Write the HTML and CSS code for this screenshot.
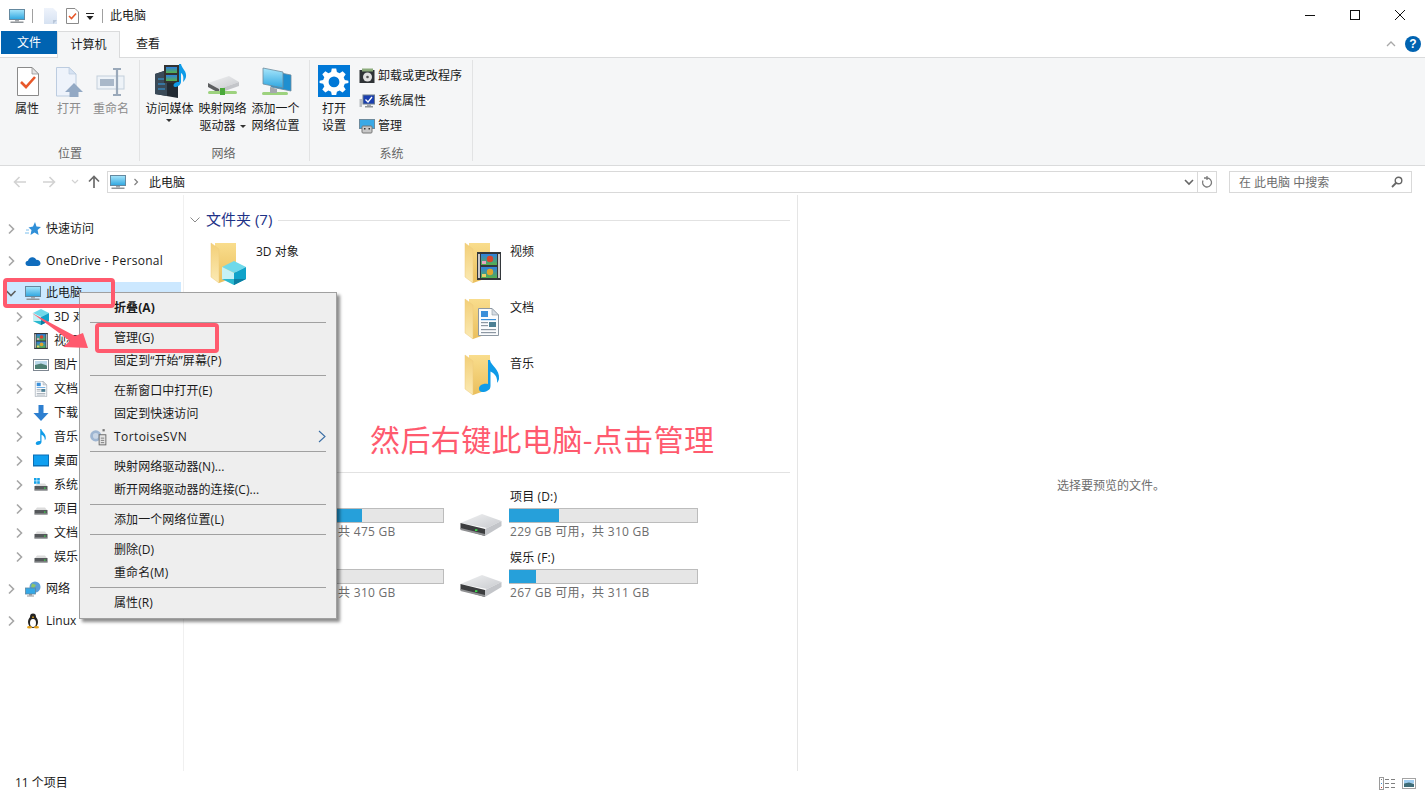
FILE: index.html
```html
<!DOCTYPE html>
<html lang="zh-CN">
<head>
<meta charset="utf-8">
<title>此电脑</title>
<link rel="stylesheet" href="styles.css">
</head>
<body>
<svg class="defs" xmlns="http://www.w3.org/2000/svg">
  <defs>
    <linearGradient id="gScreen" x1="0" y1="0" x2="0" y2="1"><stop offset="0" stop-color="#a8e6fb"/><stop offset="1" stop-color="#2ea6e0"/></linearGradient>
    <linearGradient id="gFolder" x1="0" y1="0" x2="0" y2="1"><stop offset="0" stop-color="#f9dd8d"/><stop offset="1" stop-color="#eabf5c"/></linearGradient>
    <linearGradient id="gLeaf" x1="0" y1="0" x2="0" y2="1"><stop offset="0" stop-color="#f3cf77"/><stop offset="1" stop-color="#fbeab4"/></linearGradient>
    <linearGradient id="gDrive" x1="0" y1="0" x2="1" y2="1"><stop offset="0" stop-color="#f0f1f2"/><stop offset="1" stop-color="#c9cbcf"/></linearGradient>
    <linearGradient id="gDoc" x1="0" y1="0" x2="0" y2="1"><stop offset="0" stop-color="#eef3fb"/><stop offset="1" stop-color="#d6e2f2"/></linearGradient>
    <linearGradient id="gSky" x1="0" y1="0" x2="0" y2="1"><stop offset="0" stop-color="#2f7fe0"/><stop offset="1" stop-color="#58b04a"/></linearGradient>
  </defs>
  <symbol id="i-monitor" viewBox="0 0 16 16">
    <rect x="0.5" y="1.5" width="15" height="10" fill="url(#gScreen)" stroke="#64889f"/>
    <rect x="6" y="12" width="4" height="1.5" fill="#a5a9ad"/>
    <rect x="1.5" y="13.5" width="13" height="1.5" fill="#8f9498"/>
  </symbol>
  <symbol id="i-folder" viewBox="0 0 48 48">
    <polygon points="7,4 28,4 28,38 11,44 7,40" fill="url(#gFolder)"/>
    <polygon points="3,4 11,10 11,44 3,38" fill="url(#gLeaf)" stroke="#eccb7c" stroke-width="0.5"/>
  </symbol>
  <symbol id="i-cube" viewBox="0 0 24 24">
    <polygon points="12,0 24,6 12,12 0,6" fill="#6fd9ea"/>
    <polygon points="0,6 12,12 12,24 0,18" fill="#c6f1f5"/>
    <polygon points="24,6 12,12 12,24 24,18" fill="#10a3ca"/>
    <polygon points="12,18 24,18 12,24" fill="#0b7fa3"/>
    <polygon points="12,18 0,18 12,24" fill="#2ab8cf"/>
  </symbol>
  <symbol id="i-film" viewBox="0 0 24 28">
    <rect x="0" y="0" width="24" height="28" fill="#33373b"/>
    <rect x="1" y="2" width="2" height="24" fill="#c9c9c9"/>
    <rect x="21" y="2" width="2" height="24" fill="#c9c9c9"/>
    <rect x="4" y="2" width="16" height="11" fill="url(#gSky)"/>
    <rect x="4" y="15" width="16" height="11" fill="url(#gSky)"/>
    <circle cx="13" cy="7" r="3.2" fill="#d9442c"/>
    <circle cx="13" cy="20" r="3.2" fill="#e0a62c"/>
    <rect x="5" y="9" width="4" height="3" fill="#e8a7c0"/>
    <rect x="5" y="22" width="4" height="3" fill="#e8d06a"/>
  </symbol>
  <symbol id="i-doc" viewBox="0 0 21 28">
    <polygon points="0.5,0.5 14,0.5 20.5,7 20.5,27.5 0.5,27.5" fill="#fbfcfd" stroke="#8d98a3"/>
    <polygon points="14,0.5 14,7 20.5,7" fill="#d5dce3" stroke="#8d98a3" stroke-width="0.6"/>
    <rect x="3" y="3" width="7" height="6" fill="#3a8fd9"/>
    <rect x="3" y="11" width="15" height="1.2" fill="#3a8fd9"/>
    <rect x="3" y="14" width="7" height="1.2" fill="#8d98a3"/>
    <rect x="11" y="14" width="7" height="5" fill="#4c7f94"/>
    <rect x="3" y="17" width="7" height="1.2" fill="#8d98a3"/>
    <rect x="3" y="21" width="15" height="1.2" fill="#8d98a3"/>
    <rect x="3" y="24" width="15" height="1.2" fill="#8d98a3"/>
  </symbol>
  <symbol id="i-note" viewBox="0 0 21 32">
    <path d="M9 0 L11 0 C12 6 21 9 20 19 C19.6 21 18.5 22 18 23 C19 17 15 13 11.5 11.5 L11.5 26 C11.5 30 7 32 3.5 32 C1 32 0 30.5 0 28.5 C0 25.5 4 23 9 24 Z" fill="#0f9be8"/>
  </symbol>
  <symbol id="i-bigdrive" viewBox="0 0 42 22">
    <polygon points="0.5,9 22,0 41.5,7 27,14" fill="url(#gDrive)"/>
    <polygon points="41.5,7 41.5,12 25,22 25,15" fill="#c3c5c9"/>
    <polygon points="0.5,9 25,15 25,22 0.5,15" fill="#3c3d3f"/>
    <polygon points="0.5,14 25,20 25,22 0.5,16" fill="#8f9092"/>
    <rect x="15" y="15.2" width="2.4" height="1.8" fill="#3cd64a"/>
  </symbol>
  <symbol id="i-drive" viewBox="0 0 16 16">
    <polygon points="2,9 4,6.5 12,6.5 14,9" fill="#dcdcdc"/>
    <rect x="1.5" y="9" width="13" height="4.5" fill="#55585b"/>
    <rect x="1.5" y="12.5" width="13" height="1" fill="#a0a2a4"/>
    <rect x="11" y="10.5" width="1.6" height="1.2" fill="#3cd64a"/>
  </symbol>
  <symbol id="i-sysdrive" viewBox="0 0 16 16">
    <use href="#i-drive" width="16" height="16"/>
    <rect x="1" y="1" width="2.6" height="2.6" fill="#16a2e8"/><rect x="4.2" y="1" width="2.6" height="2.6" fill="#16a2e8"/>
    <rect x="1" y="4.2" width="2.6" height="2.6" fill="#16a2e8"/><rect x="4.2" y="4.2" width="2.6" height="2.6" fill="#16a2e8"/>
  </symbol>
  <symbol id="i-star" viewBox="0 0 16 16">
    <polygon points="10,1 11.5,5.5 16,6 12.6,9 13.6,14 9.5,11.5 5.5,14 6.5,9 3.5,6.5 8,5.5" fill="#2f8fd8"/>
    <path d="M1 9 H4 M0 12 H4" stroke="#7cc0ee" stroke-width="1"/>
  </symbol>
  <symbol id="i-cloud" viewBox="0 0 16 16">
    <path d="M3.5 13 C1.5 13 0.5 11.7 0.5 10.3 C0.5 8.8 1.6 7.8 3 7.7 C3.6 5.3 5.5 4 7.6 4.2 C9.3 4.3 10.6 5.3 11.2 6.7 C13.6 6.5 15.5 8.2 15.5 10.2 C15.5 11.8 14.2 13 12.5 13 Z" fill="#0f6cbd"/>
  </symbol>
  <symbol id="i-picture" viewBox="0 0 16 16">
    <rect x="0.5" y="2.5" width="15" height="11" fill="#fff" stroke="#7e8791"/>
    <rect x="2" y="4" width="12" height="4" fill="#bcd9ea"/>
    <polygon points="2,8 8,6.5 14,8.5 14,12 2,12" fill="#4d7f73"/>
  </symbol>
  <symbol id="i-arrowdown" viewBox="0 0 16 16">
    <polygon points="5.5,0 10.5,0 10.5,8 15.5,8 8,16 0.5,8 5.5,8" fill="#2d7fd0"/>
  </symbol>
  <symbol id="i-desktop" viewBox="0 0 16 16">
    <rect x="0.5" y="2" width="15" height="11" fill="#0f9ff0" stroke="#0a6fb5"/>
    <rect x="1" y="12" width="14" height="1" fill="#0a6fb5"/>
  </symbol>
  <symbol id="i-network" viewBox="0 0 16 16">
    <circle cx="10" cy="6" r="5.5" fill="#5c9fd8"/>
    <path d="M7 2.5 L11 4 L9 7 L6 6 Z" fill="#8fc56a"/>
    <rect x="0.5" y="7" width="10" height="6" fill="#35a8e6" stroke="#5f87a0" stroke-width="0.8"/>
    <rect x="4" y="13" width="3" height="1.5" fill="#8f9498"/>
    <rect x="2" y="14.5" width="7" height="1" fill="#8f9498"/>
  </symbol>
  <symbol id="i-penguin" viewBox="0 0 16 16">
    <ellipse cx="8" cy="9" rx="5" ry="6" fill="#232323"/>
    <ellipse cx="8" cy="3.8" rx="3" ry="3.4" fill="#232323"/>
    <ellipse cx="8" cy="10" rx="3" ry="4" fill="#fff"/>
    <rect x="7" y="3.6" width="2" height="1.2" fill="#e4a11b"/>
    <ellipse cx="4.5" cy="14.2" rx="2.5" ry="1.3" fill="#e4a11b"/>
    <ellipse cx="11.5" cy="14.2" rx="2.5" ry="1.3" fill="#e4a11b"/>
  </symbol>
  <symbol id="i-chev" viewBox="0 0 16 16">
    <path d="M6 3.5 L10.5 8 L6 12.5" fill="none" stroke="#a6a6a6" stroke-width="1.6"/>
  </symbol>
  <symbol id="i-chevdown" viewBox="0 0 16 16">
    <path d="M3.5 6 L8 10.5 L12.5 6" fill="none" stroke="#5f5f5f" stroke-width="1.6"/>
  </symbol>
</svg>

<div class="window">
  <header class="titlebar">
    <div class="qat">
      <svg class="ic16 qat-mon"><use href="#i-monitor"/></svg>
      <span class="qat-sep"></span>
      <svg class="qat-doc" viewBox="0 0 13 16"><polygon points="0,0 9,0 13,4 13,16 0,16" fill="url(#gDoc)"/><polygon points="9,12 13,12 9,16" fill="#b9c7da"/></svg>
      <svg class="qat-check" viewBox="0 0 13 16"><polygon points="0.5,0.5 9,0.5 12.5,4 12.5,15.5 0.5,15.5" fill="#fff" stroke="#8a8a8a"/><path d="M3 8 L5.5 10.5 L10 5.5" fill="none" stroke="#e8582a" stroke-width="1.6"/></svg>
      <svg class="qat-drop" viewBox="0 0 8 8"><rect x="0" y="0" width="8" height="1" fill="#222"/><polygon points="0.5,3 7.5,3 4,7" fill="#222"/></svg>
      <span class="qat-sep qat-sep2"></span>
      <span class="title-text">此电脑</span>
    </div>
    <div class="winctl">
      <span class="wbtn"><svg viewBox="0 0 10 10"><rect x="0" y="5" width="10" height="1" fill="#111"/></svg></span>
      <span class="wbtn"><svg viewBox="0 0 10 10"><rect x="0.5" y="0.5" width="9" height="9" fill="none" stroke="#111"/></svg></span>
      <span class="wbtn"><svg viewBox="0 0 10 10"><path d="M0 0 L10 10 M10 0 L0 10" stroke="#111" stroke-width="1"/></svg></span>
    </div>
  </header>

  <nav class="tabs">
    <span class="tab tab-file">文件</span>
    <span class="tab tab-active">计算机</span>
    <span class="tab tab-view">查看</span>
    <span class="tabs-right">
      <svg class="ribbon-up" viewBox="0 0 10 6"><path d="M1 5 L5 1 L9 5" fill="none" stroke="#a8a8a8" stroke-width="1.3"/></svg>
      <span class="help">?</span>
    </span>
  </nav>

  <section class="ribbon">
    <div class="group group-loc">
      <div class="group-body">
        <div class="rbtn">
          <span class="rb-icon"><svg viewBox="0 0 36 36"><polygon points="8.5,5.5 23,5.5 29.5,12 29.5,33.5 8.5,33.5" fill="#fff" stroke="#8a8a8a"/><polygon points="23,5.5 23,12 29.5,12" fill="#e4e4e4" stroke="#8a8a8a" stroke-width="0.7"/><path d="M12 20 L17 25 L26 15" fill="none" stroke="#e8582a" stroke-width="2.6"/></svg></span>
          <span class="rb-label">属性</span>
        </div>
        <div class="rbtn rb-off">
          <span class="rb-icon"><svg viewBox="0 0 36 36"><polygon points="5.5,5.5 18,5.5 25,12 25,34 5.5,34" fill="#eef3fb" stroke="#bccce0"/><polygon points="18,5.5 18,12 25,12" fill="#d6e2f2" stroke="#bccce0" stroke-width="0.7"/><polygon points="23,21 32,30 27.5,30 27.5,35 18.5,35 18.5,30 14,30" fill="#93a9c4"/></svg></span>
          <span class="rb-label">打开</span>
        </div>
        <div class="rbtn rb-off">
          <span class="rb-icon"><svg viewBox="0 0 36 36"><rect x="4" y="14" width="27" height="13" fill="#eef3f8" stroke="#c3cfdc"/><rect x="7" y="17" width="14" height="7" fill="#a9b8c9"/><path d="M20 7 H28 M20 33 H28 M24 7 V33" stroke="#9aa9ba" stroke-width="2.2" fill="none"/></svg></span>
          <span class="rb-label">重命名</span>
        </div>
      </div>
      <div class="group-label">位置</div>
    </div>
    <div class="group group-net">
      <div class="group-body">
        <div class="rbtn rb-wide">
          <span class="rb-icon"><svg viewBox="0 0 36 36"><polygon points="3,12 15,8 26,12 26,36 3,32" fill="#222a33"/><polygon points="3,12 15,8 15,34 3,32" fill="#3a4a58"/><path d="M6 17 H13 M6 22 H13 M6 27 H13" stroke="#36a0e8" stroke-width="1.2"/><rect x="12" y="3" width="15" height="18" fill="#333"/><rect x="14" y="5" width="11" height="6" fill="url(#gSky)"/><rect x="14" y="13" width="11" height="6" fill="url(#gSky)"/><path d="M27 2 L29 2 C30 7 35 9 34 15 C33 18 32 19 31 20 C32 15 31 12 29 11 L29 20 C29 23 25 25 23 25 C21 25 21 22 23 21 C25 19.5 27 20 27 20 Z" fill="#0f9be8"/></svg></span>
          <span class="rb-label">访问媒体<i class="caret caret-block"></i></span>
        </div>
        <div class="rbtn rb-wide">
          <span class="rb-icon"><svg viewBox="0 0 36 36"><polygon points="3,21 24,14 34,20 14,27" fill="url(#gDrive)"/><polygon points="3,21 14,27 14,31 3,25" fill="#5c5e60"/><polygon points="34,20 14,27 14,31 34,24" fill="#c3c5c9"/><rect x="3" y="29" width="29" height="3" rx="1.5" fill="#9dd27e"/><rect x="15" y="26" width="5" height="7" fill="#4aa93a"/></svg></span>
          <span class="rb-label">映射网络<br>驱动器<i class="caret"></i></span>
        </div>
        <div class="rbtn rb-wide">
          <span class="rb-icon"><svg viewBox="0 0 36 36"><polygon points="13,9 33,13 33,29 13,25" fill="#1f8fd0" stroke="#6d8a9c" stroke-width="0.8"/><polygon points="5,6 25,10 25,26 5,22" fill="url(#gScreen)" stroke="#6d8a9c" stroke-width="0.8"/><rect x="4" y="30" width="26" height="3" rx="1.5" fill="#9dd27e"/><polygon points="12,25 19,27 19,31 12,31" fill="#a5a9ad"/></svg></span>
          <span class="rb-label">添加一个<br>网络位置</span>
        </div>
      </div>
      <div class="group-label">网络</div>
    </div>
    <div class="group group-sys">
      <div class="group-body">
        <div class="rbtn rb-set">
          <span class="rb-icon"><svg class="set-svg" viewBox="0 0 32 32"><rect width="32" height="32" fill="#0078d7"/><path fill="#fff" fill-rule="evenodd" d="M13.8 3.5 H18.2 L18.9 7.1 L21.6 8.2 L24.6 6.2 L27.7 9.3 L25.7 12.3 L26.8 15 L30.4 15.7 V18.1 L26.8 18.8 L25.7 21.5 L27.7 24.5 L24.6 27.6 L21.6 25.6 L18.9 26.7 L18.2 30 H13.8 L13.1 26.7 L10.4 25.6 L7.4 27.6 L4.3 24.5 L6.3 21.5 L5.2 18.8 L1.6 18.1 V15.7 L5.2 15 L6.3 12.3 L4.3 9.3 L7.4 6.2 L10.4 8.2 L13.1 7.1 Z M16 11.5 A5.4 5.4 0 1 0 16 22.3 A5.4 5.4 0 1 0 16 11.5 Z"/></svg></span>
          <span class="rb-label">打开<br>设置</span>
        </div>
        <ul class="rb-small">
          <li><svg class="ic16" viewBox="0 0 16 16"><rect x="0.5" y="2" width="15" height="13" fill="#2f3336"/><rect x="3" y="0.5" width="11" height="3" fill="#8cab7c"/><circle cx="8.5" cy="9" r="4.5" fill="#e2e2e2"/><circle cx="8.5" cy="9" r="1.3" fill="#555"/></svg>卸载或更改程序</li>
          <li><svg class="ic16" viewBox="0 0 16 16"><rect x="0.5" y="6" width="2.5" height="8" fill="#b9bdc2"/><rect x="4" y="2" width="11.5" height="9" fill="#1a3fb0" stroke="#6d7c8c"/><path d="M6.5 6.5 L9 9 L13 4" fill="none" stroke="#fff" stroke-width="1.3"/><rect x="8" y="11" width="4" height="2" fill="#a5a9ad"/><rect x="6" y="13" width="8" height="1.5" fill="#8f9498"/></svg>系统属性</li>
          <li><svg class="ic16" viewBox="0 0 16 16"><rect x="0.5" y="1.5" width="15" height="9" fill="#3aa9e6" stroke="#6d8a9c"/><rect x="3" y="8" width="10" height="7" rx="1" fill="#c8c8c8" stroke="#777"/><rect x="5" y="10" width="1.5" height="1.5" fill="#333"/><rect x="9.5" y="10" width="1.5" height="1.5" fill="#333"/></svg>管理</li>
        </ul>
      </div>
      <div class="group-label">系统</div>
    </div>
  </section>

  <div class="navbar">
    <div class="nav-arrows">
      <svg class="nav-a" viewBox="0 0 14 12"><path d="M13 6 H2 M6.5 1 L1.5 6 L6.5 11" fill="none" stroke="#d2d2d2" stroke-width="1.6"/></svg>
      <svg class="nav-a" viewBox="0 0 14 12"><path d="M1 6 H12 M7.5 1 L12.5 6 L7.5 11" fill="none" stroke="#d2d2d2" stroke-width="1.6"/></svg>
      <svg class="nav-d" viewBox="0 0 8 6"><path d="M1 1 L4 4 L7 1" fill="none" stroke="#d2d2d2" stroke-width="1.2"/></svg>
      <svg class="nav-u" viewBox="0 0 12 14"><path d="M6 13 V2 M1 6.5 L6 1.5 L11 6.5" fill="none" stroke="#6b6b6b" stroke-width="1.7"/></svg>
    </div>
    <div class="address">
      <svg class="ic16 addr-mon"><use href="#i-monitor"/></svg>
      <svg class="addr-chev" viewBox="0 0 6 8"><path d="M1.5 1 L4.5 4 L1.5 7" fill="none" stroke="#808080" stroke-width="1.2"/></svg>
      <span class="addr-text">此电脑</span>
      <svg class="addr-drop" viewBox="0 0 10 7"><path d="M1 1 L5 5 L9 1" fill="none" stroke="#666" stroke-width="1.6"/></svg>
      <span class="addr-refresh"><svg viewBox="0 0 12 14"><path d="M6 3 A4.5 4.5 0 1 1 2 5.5 M6 1 V5 M3 3 H6.5" fill="none" stroke="#7b7b7b" stroke-width="1.3"/></svg></span>
    </div>
    <div class="search">
      <span class="search-text">在 此电脑 中搜索</span>
      <svg class="search-ic" viewBox="0 0 12 12"><circle cx="7.5" cy="4.5" r="3.3" fill="none" stroke="#666" stroke-width="1.4"/><path d="M5 7 L1 11" stroke="#666" stroke-width="1.8"/></svg>
    </div>
  </div>

  <main class="main">
    <aside class="sidebar">
      <div class="s-row s-group"><svg class="s-chev"><use href="#i-chev"/></svg><svg class="s-ic"><use href="#i-star"/></svg><span>快速访问</span></div>
      <div class="s-row s-group"><svg class="s-chev"><use href="#i-chev"/></svg><svg class="s-ic"><use href="#i-cloud"/></svg><span class="latin">OneDrive - Personal</span></div>
      <div class="s-row s-sel"><svg class="s-chev"><use href="#i-chevdown"/></svg><svg class="s-ic"><use href="#i-monitor"/></svg><span>此电脑</span></div>
      <div class="s-row s-child"><svg class="s-chev"><use href="#i-chev"/></svg><svg class="s-ic"><use href="#i-cube"/></svg><span>3D 对象</span></div>
      <div class="s-row s-child"><svg class="s-chev"><use href="#i-chev"/></svg><svg class="s-ic"><use href="#i-film"/></svg><span>视频</span></div>
      <div class="s-row s-child"><svg class="s-chev"><use href="#i-chev"/></svg><svg class="s-ic"><use href="#i-picture"/></svg><span>图片</span></div>
      <div class="s-row s-child"><svg class="s-chev"><use href="#i-chev"/></svg><svg class="s-ic"><use href="#i-doc"/></svg><span>文档</span></div>
      <div class="s-row s-child"><svg class="s-chev"><use href="#i-chev"/></svg><svg class="s-ic"><use href="#i-arrowdown"/></svg><span>下载</span></div>
      <div class="s-row s-child"><svg class="s-chev"><use href="#i-chev"/></svg><svg class="s-ic"><use href="#i-note"/></svg><span>音乐</span></div>
      <div class="s-row s-child"><svg class="s-chev"><use href="#i-chev"/></svg><svg class="s-ic"><use href="#i-desktop"/></svg><span>桌面</span></div>
      <div class="s-row s-child"><svg class="s-chev"><use href="#i-chev"/></svg><svg class="s-ic"><use href="#i-sysdrive"/></svg><span>系统 (C:)</span></div>
      <div class="s-row s-child"><svg class="s-chev"><use href="#i-chev"/></svg><svg class="s-ic"><use href="#i-drive"/></svg><span>项目 (D:)</span></div>
      <div class="s-row s-child"><svg class="s-chev"><use href="#i-chev"/></svg><svg class="s-ic"><use href="#i-drive"/></svg><span>文档 (E:)</span></div>
      <div class="s-row s-child"><svg class="s-chev"><use href="#i-chev"/></svg><svg class="s-ic"><use href="#i-drive"/></svg><span>娱乐 (F:)</span></div>
      <div class="s-row s-group s-gap"><svg class="s-chev"><use href="#i-chev"/></svg><svg class="s-ic"><use href="#i-network"/></svg><span>网络</span></div>
      <div class="s-row s-group"><svg class="s-chev"><use href="#i-chev"/></svg><svg class="s-ic"><use href="#i-penguin"/></svg><span>Linux</span></div>
    </aside>

    <section class="content">
      <div class="sec-head">
        <svg class="sec-chev" viewBox="0 0 10 6"><path d="M0.5 0.5 L5 5 L9.5 0.5" fill="none" stroke="#8a8a8a" stroke-width="1"/></svg>
        <span class="sec-title">文件夹 (7)</span>
        <span class="sec-line"></span>
      </div>
      <div class="folders">
        <div class="tile"><span class="f-box"><svg class="f-svg"><use href="#i-folder"/></svg><svg class="ov ov-cube"><use href="#i-cube"/></svg></span><span>3D 对象</span></div>
        <div class="tile"><span class="f-box"><svg class="f-svg"><use href="#i-folder"/></svg><svg class="ov ov-film"><use href="#i-film"/></svg></span><span>视频</span></div>
        <div class="tile"><span class="f-box"><svg class="f-svg"><use href="#i-folder"/></svg></span><span>图片</span></div>
        <div class="tile"><span class="f-box"><svg class="f-svg"><use href="#i-folder"/></svg><svg class="ov ov-doc"><use href="#i-doc"/></svg></span><span>文档</span></div>
        <div class="tile"><span class="f-box"><svg class="f-svg"><use href="#i-folder"/></svg></span><span>下载</span></div>
        <div class="tile"><span class="f-box"><svg class="f-svg"><use href="#i-folder"/></svg><svg class="ov ov-note"><use href="#i-note"/></svg></span><span>音乐</span></div>
        <div class="tile"><span class="f-box"><svg class="f-svg"><use href="#i-folder"/></svg></span><span>桌面</span></div>
      </div>
      <div class="sec-head sec-head2">
        <span class="sec-line"></span>
      </div>
      <div class="drives">
        <div class="drive"><svg class="d-ic"><use href="#i-bigdrive"/></svg><div class="d-info"><div class="d-name">系统 (C:)</div><div class="d-bar"><i class="d-fill" style="width:57%"></i></div><div class="d-free">204 GB 可用，共 475 GB</div></div></div>
        <div class="drive"><svg class="d-ic"><use href="#i-bigdrive"/></svg><div class="d-info"><div class="d-name">项目 (D:)</div><div class="d-bar"><i class="d-fill" style="width:26.5%"></i></div><div class="d-free">229 GB 可用，共 310 GB</div></div></div>
        <div class="drive"><svg class="d-ic"><use href="#i-bigdrive"/></svg><div class="d-info"><div class="d-name">文档 (E:)</div><div class="d-bar"><i class="d-fill" style="width:20%"></i></div><div class="d-free">248 GB 可用，共 310 GB</div></div></div>
        <div class="drive"><svg class="d-ic"><use href="#i-bigdrive"/></svg><div class="d-info"><div class="d-name">娱乐 (F:)</div><div class="d-bar"><i class="d-fill" style="width:14.2%"></i></div><div class="d-free">267 GB 可用，共 311 GB</div></div></div>
      </div>
    </section>

    <section class="preview">选择要预览的文件。</section>
  </main>

  <footer class="status">
    <span class="status-text">11 个项目</span>
    <span class="status-views">
      <svg class="sv1" viewBox="0 0 17 13"><rect x="0.5" y="0.5" width="4" height="12" fill="#fff" stroke="#9a9a9a"/><rect x="2" y="2" width="1" height="1" fill="#777"/><rect x="2" y="6" width="1" height="1" fill="#3a8fd9"/><rect x="2" y="10" width="1" height="1" fill="#c0392b"/><path d="M6 2.5 H10 M12 2.5 H16 M6 6.5 H10 M12 6.5 H16 M6 10.5 H10 M12 10.5 H16" stroke="#808080"/></svg>
      <svg class="sv2" viewBox="0 0 14 11"><rect x="0.5" y="0.5" width="13" height="10" fill="#fff" stroke="#a3a3a3"/><rect x="2" y="2" width="10" height="3.5" fill="#9ecdf0"/><polygon points="2,5.5 7,4.5 12,6 12,9 2,9" fill="#3f6d78"/></svg>
    </span>
  </footer>
</div>

<div class="menu">
  <div class="m-item m-bold">折叠(A)</div>
  <div class="m-sep"></div>
  <div class="m-item">管理(G)</div>
  <div class="m-item">固定到“开始”屏幕(P)</div>
  <div class="m-sep"></div>
  <div class="m-item">在新窗口中打开(E)</div>
  <div class="m-item">固定到快速访问</div>
  <div class="m-item m-svn">
    <svg class="m-ic" viewBox="0 0 16 16"><circle cx="6" cy="7" r="5" fill="#9fb6d2"/><circle cx="6" cy="7" r="2.5" fill="#c9d6e6"/><rect x="9" y="6" width="6" height="9" fill="#e4e4e4" stroke="#666" stroke-width="0.8"/><path d="M10.5 9 H13.5 M10.5 11 H13.5 M10.5 13 H13.5" stroke="#666" stroke-width="0.7"/><rect x="12" y="1" width="2" height="2" fill="#777"/></svg>
    <span class="svn-label">TortoiseSVN</span>
    <svg class="m-more" viewBox="0 0 8 13"><path d="M1 1 L7 6.5 L1 12" fill="none" stroke="#3a6ea5" stroke-width="1.1"/></svg>
  </div>
  <div class="m-sep"></div>
  <div class="m-item">映射网络驱动器(N)...</div>
  <div class="m-item">断开网络驱动器的连接(C)...</div>
  <div class="m-sep"></div>
  <div class="m-item">添加一个网络位置(L)</div>
  <div class="m-sep"></div>
  <div class="m-item">删除(D)</div>
  <div class="m-item">重命名(M)</div>
  <div class="m-sep"></div>
  <div class="m-item">属性(R)</div>
</div>

<div class="mark mark-pc"></div>
<div class="mark mark-manage"></div>
<svg class="mark-arrow" viewBox="0 0 100 60"><polygon points="32,10 75,33 83,30 88,45 63,44 70,38" fill="#ff5a6e"/></svg>
<div class="caption">然后右键此电脑-点击管理</div>
</body>
</html>
```

FILE: styles.css
```css
* { box-sizing: border-box; }
html, body { margin: 0; padding: 0; height: 100%; }
body {
  background: #fff;
  color: #1a1a1a;
  font: 12px/18px "Open Sans", "Noto Sans CJK SC", sans-serif;
  overflow: hidden;
  position: relative;
}
svg { display: block; flex: none; }
ul { list-style: none; margin: 0; padding: 0; }
i { font-style: normal; }
.defs { position: absolute; width: 0; height: 0; }
.ic16 { width: 16px; height: 16px; }

.window { display: flex; flex-direction: column; width: 1425px; height: 795px; }

/* title bar */
.titlebar { height: 31px; display: flex; justify-content: space-between; flex: none; }
.qat { display: flex; align-items: center; padding-left: 9px; }
.qat-sep { width: 1px; height: 14px; background: #a0a0a0; margin-left: 7px; }
.qat-doc { width: 13px; height: 16px; margin-left: 11px; }
.qat-check { width: 13px; height: 16px; margin-left: 9px; }
.qat-drop { width: 8px; height: 8px; margin-left: 7px; margin-top: 2px; }
.qat-sep2 { margin-left: 8px; }
.title-text { margin-left: 7px; }
.winctl { display: flex; margin-right: 3px; }
.wbtn { width: 45px; height: 30px; display: flex; align-items: center; justify-content: center; }
.wbtn svg { width: 10px; height: 10px; }

/* tabs */
.tabs { height: 27px; flex: none; display: flex; border-bottom: 1px solid #dadbdc; align-items: flex-start; }
.tab { display: flex; align-items: center; justify-content: center; }
.tab-file { width: 56px; height: 23px; margin-left: 1px; background: #0063b1; color: #fff; }
.tab-active { width: 63px; height: 27px; background: #f5f6f7; border: 1px solid #dadbdc; border-bottom: 0; }
.tab-view { width: 56px; height: 25px; }
.tabs-right { margin-left: auto; display: flex; align-items: center; height: 26px; padding-right: 4px; }
.ribbon-up { width: 10px; height: 6px; margin-right: 9px; }
.help { width: 16px; height: 16px; border-radius: 50%; background: #0063b1; color: #fff; font: bold 12px/16px "Liberation Sans", sans-serif; text-align: center; }

/* ribbon */
.ribbon { height: 108px; flex: none; display: flex; background: #f5f6f7; border-bottom: 1px solid #dadbdc; }
.group { display: flex; flex-direction: column; position: relative; }
.group::after { content: ""; position: absolute; right: 0; top: 2px; bottom: 4px; width: 1px; background: #e2e3e4; }
.group-loc { width: 140px; padding-left: 6px; }
.group-net { width: 170px; padding-left: 3px; }
.group-sys { width: 163px; padding-left: 6px; }
.group-body { display: flex; flex: none; height: 87px; }
.group-label { text-align: center; color: #666; line-height: 16px; margin-top: auto; padding-bottom: 3px; padding-right: 6px; }
.rbtn { width: 42px; display: flex; flex-direction: column; align-items: center; }
.rb-wide { width: 53px; }
.rb-set { width: 36px; }
.rb-icon { display: block; height: 42px; padding-top: 4px; }
.rb-icon svg { width: 36px; height: 36px; }
.rb-icon .set-svg { width: 32px; height: 32px; margin-top: 3px; }
.rb-label { display: block; text-align: center; line-height: 17px; white-space: nowrap; }
.rb-off .rb-label { color: #8c8c8c; }
.caret { display: inline-block; width: 0; height: 0; border: 3px solid transparent; border-top: 3px solid #333; border-bottom: 0; margin-left: 4px; vertical-align: middle; }
.caret-block { display: block; margin: 2px auto 0; }
.rb-small { margin-left: 7px; padding-top: 5px; }
.rb-small li { display: flex; align-items: center; gap: 3px; height: 25px; white-space: nowrap; }

/* nav */
.navbar { height: 29px; flex: none; display: flex; align-items: flex-start; padding-top: 5px; }
.nav-arrows { width: 107px; height: 22px; display: flex; align-items: center; padding-left: 13px; }
.nav-a { width: 14px; height: 12px; margin-right: 15px; }
.nav-d { width: 8px; height: 6px; }
.nav-u { width: 12px; height: 14px; margin-left: 9px; }
.address { width: 1110px; height: 22px; border: 1px solid #d9d9d9; display: flex; align-items: center; padding-left: 2px; }
.addr-chev { width: 6px; height: 8px; margin-left: 7px; }
.addr-text { margin-left: 10px; padding-top: 1px; }
.addr-drop { width: 10px; height: 7px; margin-left: auto; margin-right: 3px; }
.addr-refresh { width: 19px; height: 20px; border-left: 1px solid #d9d9d9; display: flex; align-items: center; justify-content: center; }
.addr-refresh svg { width: 12px; height: 14px; }
.search { width: 183px; height: 22px; margin-left: 12px; border: 1px solid #d9d9d9; display: flex; align-items: center; padding: 0 8px 0 9px; justify-content: space-between; color: #6d6d6d; }
.search-text { padding-top: 1px; }
.search-ic { width: 12px; height: 12px; }

/* main */
.main { flex: 1; display: flex; min-height: 0; }
.sidebar { width: 184px; flex: none; border-right: 1px solid #f0f0f0; padding-top: 22px; display: flex; flex-direction: column; }
.s-row { height: 22px; flex: none; margin: 1px 0; display: flex; align-items: center; white-space: nowrap; overflow: hidden; }
.s-group { margin-bottom: 9px; padding-left: 3px; }
.s-sel { margin-left: 3px; padding-left: 0; width: 178px; background: #cce8ff; }
.s-child { padding-left: 11px; }
.s-gap { margin-top: 9px; }
.s-chev { width: 16px; height: 16px; }
.s-ic { width: 16px; height: 16px; margin-left: 6px; margin-right: 5px; }
.latin { letter-spacing: .28px; }

/* content */
.content { width: 614px; flex: none; border-right: 1px solid #e5e5e5; padding-top: 14px; overflow: hidden; }
.sec-head { height: 22px; display: flex; align-items: center; padding-left: 6px; padding-right: 7px; }
.sec-chev { width: 10px; height: 6px; }
.sec-title { color: #1e3287; font-size: 15px; margin-left: 6px; margin-bottom: 3px; white-space: nowrap; }
.sec-line { flex: 1; height: 1px; background: #e2e2e2; margin-left: 6px; }
.folders { display: grid; grid-template-columns: 254px 254px; grid-auto-rows: 56px; padding-left: 24px; margin-top: 6px; }
.tile { display: flex; align-items: flex-start; }
.tile > span:last-child { margin-top: 6px; }
.f-box { display: block; position: relative; width: 48px; height: 48px; margin-top: 2px; }
.f-svg { width: 48px; height: 48px; }
.ov { position: absolute; }
.ov-cube { left: 14px; top: 22px; width: 24px; height: 24px; }
.ov-film { left: 15px; top: 13px; width: 24px; height: 28px; }
.ov-doc { left: 16px; top: 13px; width: 21px; height: 28px; }
.ov-note { left: 17px; top: 9px; width: 21px; height: 32px; }
.drives { display: grid; grid-template-columns: 254px 254px; row-gap: 8px; padding-left: 20px; margin-top: 5px; }
.drive { display: flex; align-items: flex-start; }
.d-ic { width: 42px; height: 22px; margin: 26px 6px 0 2px; }
.d-info { width: 189px; margin-left: 1px; }
.d-name { height: 18px; padding-left: 1px; letter-spacing: .15px; }
.d-bar { height: 15px; margin-top: 2px; background: #e6e6e6; border: 1px solid #bcbcbc; }
.d-fill { display: block; height: 13px; background: #26a0da; margin: 0 0 0 -1px; }
.d-free { color: #6d6d6d; height: 18px; padding-left: 1px; white-space: nowrap; letter-spacing: .28px; }

/* preview */
.preview { flex: 1; display: flex; align-items: center; justify-content: center; color: #6d6d6d; padding: 6px 1px 0 0; }

/* status */
.status { height: 24px; flex: none; display: flex; align-items: center; justify-content: space-between; padding: 0 9px 0 15px; }
.status-views { display: flex; align-items: center; gap: 6px; }
.sv1 { width: 17px; height: 13px; }
.sv2 { width: 14px; height: 11px; }

/* context menu */
.menu {
  position: absolute; left: 79px; top: 292px; width: 258px; height: 327px;
  background: #eeeeee; border: 1px solid #a0a0a0; padding: 3px 0 2px;
  box-shadow: 3px 3px 3px rgba(0, 0, 0, .45);
}
.m-item { height: 23px; line-height: 23px; padding-left: 34px; position: relative; white-space: nowrap; letter-spacing: .07px; }
.m-bold { font-weight: 700; }
.m-sep { height: 1px; margin: 3px 10px; background: #a0a0a0; }
.m-ic { position: absolute; left: 9px; top: 3px; width: 18px; height: 18px; }
.m-more { position: absolute; right: 10px; top: 5px; width: 8px; height: 13px; }
.svn-label { letter-spacing: .42px; }

/* annotations over the screenshot */
.mark { position: absolute; border: 4px solid #ff5a6e; border-radius: 4px; }
.mark-pc { left: 3px; top: 278px; width: 112px; height: 30px; }
.mark-manage { left: 95px; top: 323px; width: 124px; height: 30px; }
.mark-arrow { position: absolute; left: 0; top: 303px; width: 100px; height: 60px; }
.caption { position: absolute; left: 370px; top: 420px; color: #ff5a6e; font-size: 30px; line-height: 40px; white-space: nowrap; letter-spacing: .4px; }
```
